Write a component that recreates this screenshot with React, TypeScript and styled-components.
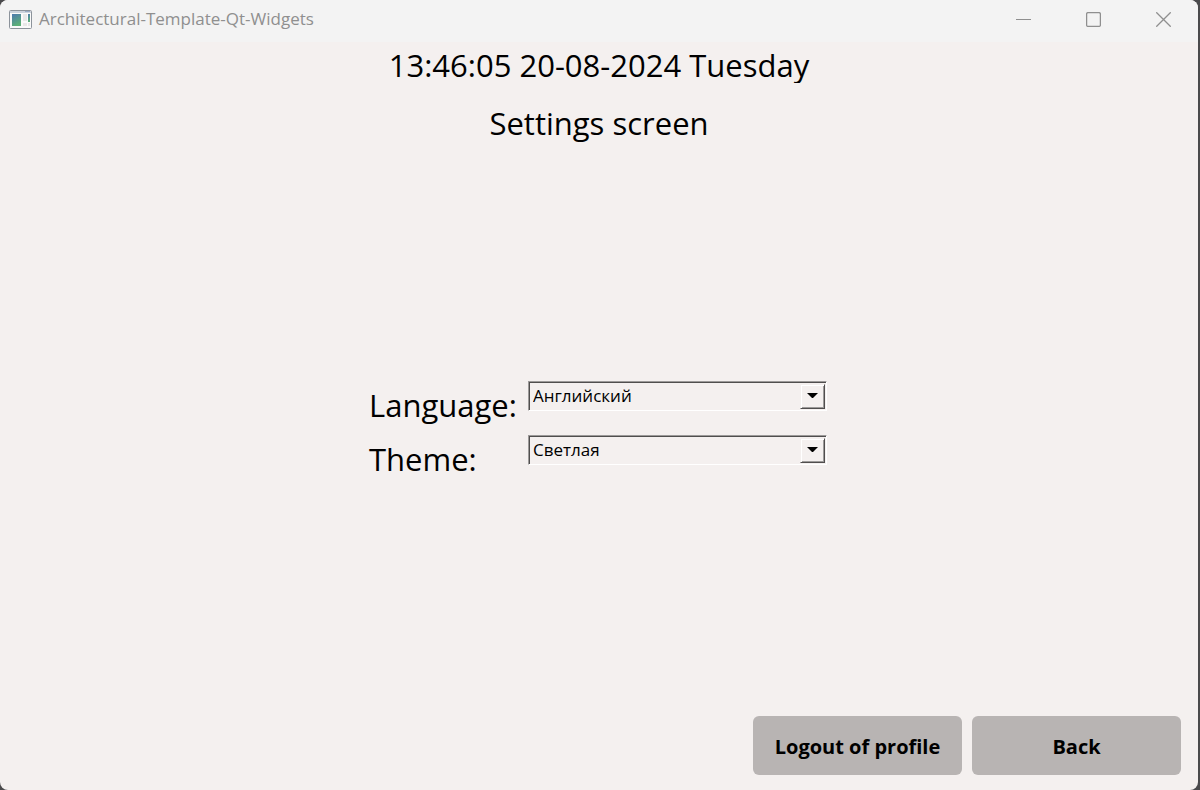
import React, { useState } from "react";
import styled, { createGlobalStyle } from "styled-components";

const GlobalStyle = createGlobalStyle`
  *, *::before, *::after { box-sizing: border-box; }
  body {
    margin: 0;
    background: #4a4a4c;
    color: #000;
    font-family: "Segoe UI", "Open Sans", "Noto Sans", sans-serif;
  }
`;

const Window = styled.div`
  display: flex;
  flex-direction: column;
  min-height: 100vh;
  margin-right: 2px;
  background: #f4f0ef;
  border-radius: 8px;
  overflow: hidden;
`;

const TitleBar = styled.header`
  display: flex;
  align-items: center;
  height: 42px;
  padding: 0 16px 4px 9px;
  background: #f3f3f3;
`;

const AppTitle = styled.span`
  flex: 1;
  margin-left: 7px;
  color: #8f8f8f;
  font-size: 17px;
  line-height: 24px;
`;

const WindowControls = styled.div`
  display: flex;
  gap: 32px;
`;

const ControlButton = styled.button`
  display: flex;
  align-items: center;
  justify-content: center;
  width: 38px;
  height: 30px;
  padding: 0;
  border: 0;
  background: none;
  color: #8f8f8f;
`;

const Clock = styled.p`
  height: 41px;
  margin: 0;
  overflow: hidden;
  text-align: center;
  font-size: 31px;
  line-height: 46px;
`;

const Heading = styled.h1`
  margin: 18px 0 2px;
  text-align: center;
  font-size: 31px;
  font-weight: 400;
  line-height: 44px;
`;

const Content = styled.main`
  display: flex;
  flex: 1;
  flex-direction: column;
  padding-right: 2px;
`;

const Form = styled.form`
  display: grid;
  grid-template-columns: 150px 299px;
  gap: 6px 9px;
  margin: auto;
`;

const Label = styled.label`
  font-size: 31px;
  line-height: 48px;
  white-space: nowrap;
`;

const ComboBox = styled.div`
  display: grid;
  grid-template-columns: 1fr 26px;
  height: 30px;
  border: 1px solid;
  border-color: #9c9a99 #fff #fff #9c9a99;
  box-shadow: inset 1px 1px 0 #504e4e;
`;

const Select = styled.select`
  grid-area: 1 / 1 / 2 / 3;
  appearance: none;
  padding: 0 30px 0 4px;
  border: 0;
  outline: 0;
  background: none;
  color: #000;
  font-family: inherit;
  font-size: 17px;
`;

const Arrow = styled.span`
  display: flex;
  grid-area: 1 / 2 / 2 / 3;
  align-items: center;
  justify-content: center;
  height: 25px;
  margin: 2px 1px 0 0;
  border: 1px solid;
  border-color: #f4f0ef #504e4e #504e4e #f4f0ef;
  box-shadow: inset 1px 1px 0 #fff, inset -1px -1px 0 #9c9a99;
  pointer-events: none;
`;

const Footer = styled.footer`
  display: flex;
  justify-content: flex-end;
  gap: 10px;
  padding: 0 17px 15px;
`;

const ActionButton = styled.button`
  width: 209px;
  height: 59px;
  padding: 2px 0 0;
  border: 0;
  border-radius: 6px;
  background: #b8b4b3;
  color: #000;
  font-family: inherit;
  font-size: 20px;
  font-weight: 700;
`;

function AppIcon() {
  return (
    <svg width="23" height="19" viewBox="0 0 23 19" aria-hidden="true">
      <defs>
        <linearGradient id="pane" x1="0" y1="0" x2="0.4" y2="1">
          <stop offset="0" stopColor="#4c78b0" />
          <stop offset="1" stopColor="#5cb078" />
        </linearGradient>
      </defs>
      <rect x="0.5" y="0.5" width="22" height="18" rx="1" fill="#fafafa" stroke="#8c939b" />
      <path d="M1 1h21v2H1z" fill="#ccd3dd" />
      <path d="M16 1h5v1h-5z" fill="#9aabc4" />
      <path d="M3 4h9v12H3z" fill="url(#pane)" />
      <path d="M14 4h4v7h-4zM14 13h4v3h-4zM19 13h2v3h-2z" fill="#e8e8e8" />
      <path d="M19 4h2v8h-2z" fill="url(#pane)" />
    </svg>
  );
}

interface ComboProps {
  id: string;
  label: string;
  options: string[];
}

function ComboField({ id, label, options }: ComboProps) {
  const [value, setValue] = useState(options[0]);
  return (
    <>
      <Label htmlFor={id}>{label}</Label>
      <ComboBox>
        <Select id={id} value={value} onChange={(e) => setValue(e.target.value)}>
          {options.map((option) => (
            <option key={option}>{option}</option>
          ))}
        </Select>
        <Arrow>
          <svg width="11" height="6" viewBox="0 0 11 6" aria-hidden="true">
            <path d="M0 0h11L6 5H5z" fill="#000" />
          </svg>
        </Arrow>
      </ComboBox>
    </>
  );
}

export default function App() {
  return (
    <>
      <GlobalStyle />
      <Window>
        <TitleBar>
          <AppIcon />
          <AppTitle>Architectural-Template-Qt-Widgets</AppTitle>
          <WindowControls>
            <ControlButton type="button" aria-label="Minimize">
              <svg width="15" height="15" viewBox="0 0 15 15" aria-hidden="true">
                <path d="M0 7.5h15" stroke="currentColor" />
              </svg>
            </ControlButton>
            <ControlButton type="button" aria-label="Maximize">
              <svg width="15" height="15" viewBox="0 0 15 15" fill="none" aria-hidden="true">
                <rect x="0.6" y="0.6" width="13.8" height="13.8" rx="1.5" stroke="currentColor" strokeWidth="1.3" />
              </svg>
            </ControlButton>
            <ControlButton type="button" aria-label="Close">
              <svg width="15" height="15" viewBox="0 0 15 15" aria-hidden="true">
                <path d="M0.3 0.3l14.4 14.4M14.7 0.3L0.3 14.7" stroke="currentColor" strokeWidth="1.3" />
              </svg>
            </ControlButton>
          </WindowControls>
        </TitleBar>
        <Clock>13:46:05 20-08-2024 Tuesday</Clock>
        <Heading>Settings screen</Heading>
        <Content>
          <Form>
            <ComboField id="language" label="Language:" options={["Английский"]} />
            <ComboField id="theme" label="Theme:" options={["Светлая"]} />
          </Form>
        </Content>
        <Footer>
          <ActionButton type="button">Logout of profile</ActionButton>
          <ActionButton type="button">Back</ActionButton>
        </Footer>
      </Window>
    </>
  );
}
